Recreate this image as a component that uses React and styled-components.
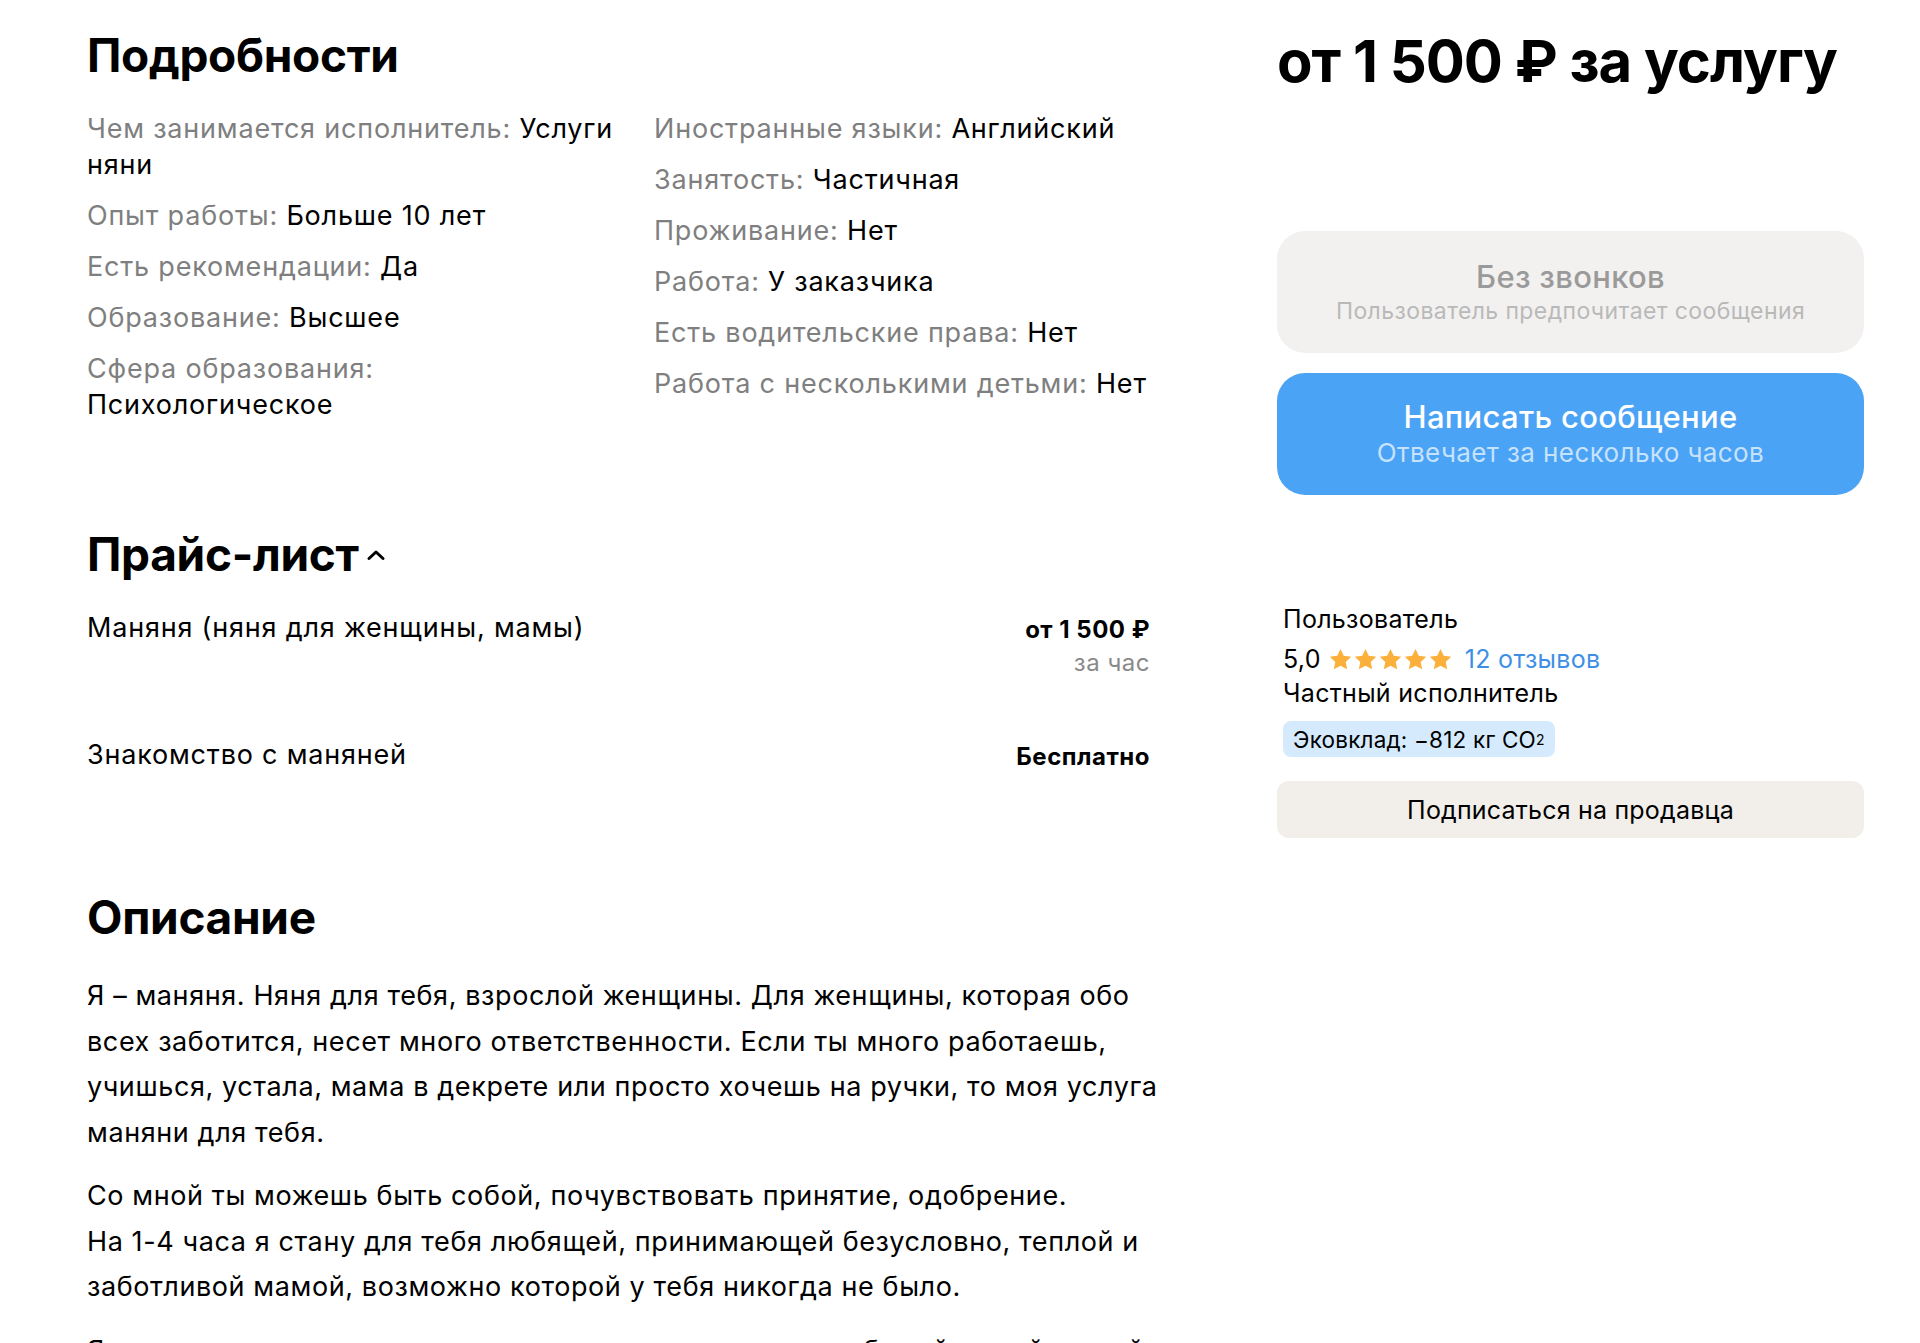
import React from 'react';
import styled, { createGlobalStyle } from 'styled-components';

const GlobalStyle = createGlobalStyle`
  html, body {
    margin: 0;
    padding: 0;
    background: #fff;
  }
  body {
    font-family: Inter, "Noto Sans", "Liberation Sans", sans-serif;
    color: #000;
    -webkit-font-smoothing: antialiased;
  }
`;

const details = {
  left: [
    ['Чем занимается исполнитель', 'Услуги няни'],
    ['Опыт работы', 'Больше 10 лет'],
    ['Есть рекомендации', 'Да'],
    ['Образование', 'Высшее'],
    ['Сфера образования', 'Психологическое'],
  ],
  right: [
    ['Иностранные языки', 'Английский'],
    ['Занятость', 'Частичная'],
    ['Проживание', 'Нет'],
    ['Работа', 'У заказчика'],
    ['Есть водительские права', 'Нет'],
    ['Работа с несколькими детьми', 'Нет'],
  ],
};

const prices = [
  { name: 'Маняня (няня для женщины, мамы)', price: 'от 1\u00A0500 ₽', unit: 'за час' },
  { name: 'Знакомство с маняней', price: 'Бесплатно' },
];

function Star() {
  return (
    <svg width="25" height="25" viewBox="0 0 24 24">
      <path
        d="M12 1.8l3.1 6.6 7.2.9-5.3 5 1.4 7.1L12 17.9l-6.4 3.5 1.4-7.1-5.3-5 7.2-.9z"
        fill="#fbb03b"
      />
    </svg>
  );
}

function Chevron() {
  return (
    <svg width="22" height="12" viewBox="0 0 22 12">
      <polyline
        points="4,9.5 11,3 18,9.5"
        fill="none"
        stroke="#000"
        strokeWidth="3"
        strokeLinecap="round"
        strokeLinejoin="round"
      />
    </svg>
  );
}

export default function App() {
  return (
    <>
      <GlobalStyle />
      <Page>
        <Main>
          <Title>Подробности</Title>
          <DetailsGrid>
            {['left', 'right'].map((side) => (
              <DetailsColumn key={side}>
                {details[side].map(([label, value]) => (
                  <DetailItem key={label}>
                    <Label>{label}: </Label>
                    {value}
                  </DetailItem>
                ))}
              </DetailsColumn>
            ))}
          </DetailsGrid>

          <Title $top={104}>
            Прайс-лист
            <Chevron />
          </Title>
          <PriceList>
            {prices.map((p) => (
              <PriceRow key={p.name}>
                <PriceName>{p.name}</PriceName>
                <PriceValue>
                  <strong>{p.price}</strong>
                  {p.unit && <PriceUnit>{p.unit}</PriceUnit>}
                </PriceValue>
              </PriceRow>
            ))}
          </PriceList>

          <Title $top={117}>Описание</Title>
          <Description>
            <p>
              Я – маняня. Няня для тебя, взрослой женщины. Для женщины, которая обо всех
              заботится, несет много ответственности. Если ты много работаешь, учишься,
              устала, мама в декрете или просто хочешь на ручки, то моя услуга маняни для
              тебя.
            </p>
            <p>
              Со мной ты можешь быть собой, почувствовать принятие, одобрение.
              <br />
              На 1-4 часа я стану для тебя любящей, принимающей безусловно, теплой и
              заботливой мамой, возможно которой у тебя никогда не было.
            </p>
            <p>
              Я умею слушать, поддерживать, утешать и стать для тебя той самой мамой, о
              которой ты мечтала.
            </p>
          </Description>
        </Main>

        <Aside>
          <BigPrice>от 1&nbsp;500 ₽ за услугу</BigPrice>
          <Buttons>
            <ContactButton $variant="muted">
              <ButtonTitle>Без звонков</ButtonTitle>
              <ButtonSub>Пользователь предпочитает сообщения</ButtonSub>
            </ContactButton>
            <ContactButton $variant="primary">
              <ButtonTitle>Написать сообщение</ButtonTitle>
              <ButtonSub $large>Отвечает за несколько часов</ButtonSub>
            </ContactButton>
          </Buttons>

          <Seller>
            <SellerLine>Пользователь</SellerLine>
            <Rating>
              5,0
              <Stars>
                {[0, 1, 2, 3, 4].map((i) => (
                  <Star key={i} />
                ))}
              </Stars>
              <ReviewsLink href="#">12 отзывов</ReviewsLink>
            </Rating>
            <SellerLine>Частный исполнитель</SellerLine>
            <EcoBadge>
              Эковклад: −812 кг CO<sub>2</sub>
            </EcoBadge>
          </Seller>
          <SubscribeButton>Подписаться на продавца</SubscribeButton>
        </Aside>
      </Page>
    </>
  );
}

const Page = styled.div`
  display: grid;
  grid-template-columns: 1090px 587px;
  column-gap: 100px;
  padding: 0 56px 0 87px;
  height: 1343px;
  overflow: hidden;
`;

const Main = styled.main`
  padding-top: 28px;
`;

const Title = styled.h2`
  display: flex;
  align-items: center;
  gap: 6px;
  margin: ${(p) => p.$top || 0}px 0 0;
  font-size: 46px;
  line-height: 54px;
  font-weight: 700;
  letter-spacing: -0.3px;

  svg {
    margin-top: 2px;
  }
`;

const DetailsGrid = styled.div`
  display: grid;
  grid-template-columns: 533px 1fr;
  column-gap: 34px;
  margin-top: 29px;
`;

const DetailsColumn = styled.div`
  display: flex;
  flex-direction: column;
  gap: 15px;
`;

const DetailItem = styled.div`
  font-size: 27px;
  line-height: 36px;
  letter-spacing: 0.8px;
  color: #000;
`;

const Label = styled.span`
  color: #7f7f7f;
`;

const PriceList = styled.div`
  display: flex;
  flex-direction: column;
  gap: 58px;
  margin-top: 29px;
  padding-right: 27px;
`;

const PriceRow = styled.div`
  display: flex;
  justify-content: space-between;
  align-items: flex-start;
`;

const PriceName = styled.div`
  font-size: 27px;
  line-height: 36px;
  letter-spacing: 0.8px;
`;

const PriceValue = styled.div`
  display: flex;
  flex-direction: column;
  align-items: flex-end;
  padding-top: 3px;
  font-size: 24px;
  line-height: 33px;
  letter-spacing: 0.5px;

  strong {
    font-weight: 700;
  }
`;

const PriceUnit = styled.span`
  color: #8a8a8a;
`;

const Description = styled.div`
  margin-top: 29px;
  font-size: 27px;
  line-height: 45.5px;
  letter-spacing: 0.6px;

  p {
    margin: 0 0 18px;
  }
`;

const Aside = styled.aside`
  display: flex;
  flex-direction: column;
`;

const BigPrice = styled.div`
  margin-top: 26px;
  font-size: 58px;
  line-height: 70px;
  font-weight: 700;
  letter-spacing: -1px;
  white-space: nowrap;
`;

const Buttons = styled.div`
  display: flex;
  flex-direction: column;
  gap: 20px;
  margin-top: 135px;
`;

const ContactButton = styled.button`
  display: flex;
  flex-direction: column;
  align-items: center;
  justify-content: center;
  height: 122px;
  border: none;
  border-radius: 28px;
  font-family: inherit;
  background: ${(p) => (p.$variant === 'primary' ? '#4ba3f5' : '#f2f1f0')};
  color: ${(p) => (p.$variant === 'primary' ? '#fff' : '#9a9a9a')};

  span:last-child {
    color: ${(p) => (p.$variant === 'primary' ? '#c6e2fd' : '#b9b9b9')};
  }
`;

const ButtonTitle = styled.span`
  font-size: 31px;
  line-height: 38px;
  font-weight: 500;
  letter-spacing: 0.3px;
`;

const ButtonSub = styled.span`
  font-size: ${(p) => (p.$large ? 26 : 23)}px;
  line-height: ${(p) => (p.$large ? 34 : 30)}px;
  letter-spacing: 0.4px;
`;

const Seller = styled.div`
  display: flex;
  flex-direction: column;
  align-items: flex-start;
  margin-top: 107px;
  padding-left: 6px;
`;

const SellerLine = styled.div`
  font-size: 25px;
  line-height: 34px;
  letter-spacing: 0.3px;
`;

const Rating = styled.div`
  display: flex;
  align-items: center;
  margin-top: 6px;
  font-size: 25px;
  line-height: 34px;
  letter-spacing: 0.3px;
`;

const Stars = styled.span`
  display: inline-flex;
  margin: 0 12px 0 7px;
`;

const ReviewsLink = styled.a`
  color: #3d8fe6;
  text-decoration: none;
`;

const EcoBadge = styled.div`
  margin-top: 11px;
  padding: 0 10px;
  height: 36px;
  display: flex;
  align-items: center;
  background: #d5ebfd;
  border-radius: 8px;
  font-size: 22.5px;
  letter-spacing: 0.2px;

  sub {
    font-size: 14px;
    vertical-align: -2px;
  }
`;

const SubscribeButton = styled.button`
  margin-top: 24px;
  height: 57px;
  border: none;
  border-radius: 12px;
  background: #f2efea;
  font-family: inherit;
  font-size: 25px;
  letter-spacing: 0.2px;
  color: #000;
`;
